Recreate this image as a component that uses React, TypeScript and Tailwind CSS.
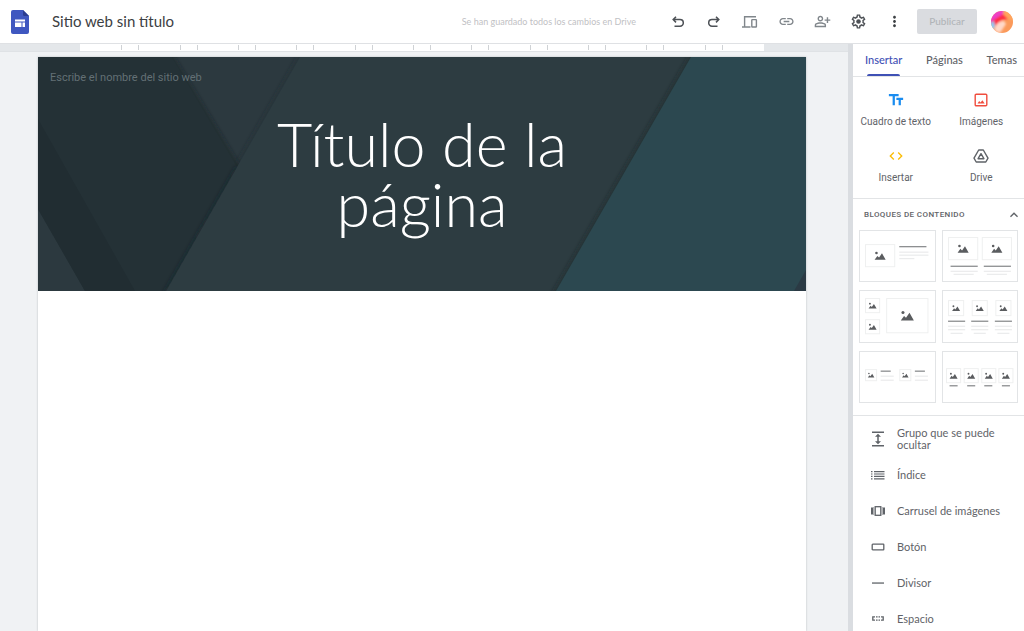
import { useState } from "react";
import type { ReactNode } from "react";
import {
  MdCode,
  MdExpand,
  MdKeyboardArrowUp,
  MdLink,
  MdMoreVert,
  MdOutlinePersonAddAlt,
  MdTextFields,
} from "react-icons/md";

function SitesLogo() {
  return (
    <svg width="18" height="24" viewBox="0 0 18 24" aria-hidden="true">
      <path d="M2 0h10l6 6v16a2 2 0 0 1-2 2H2a2 2 0 0 1-2-2V2a2 2 0 0 1 2-2z" fill="#3f57c0" />
      <path d="M12 0l6 6h-4.500a1.500 1.500 0 0 1-1.500-1.500z" fill="#2a3c8f" />
      <path d="M4 9.500h10v2H4zM4 12.500h6.500v4.500H4zM11.500 12.500H14v4.500h-2.500z" fill="#fff" />
    </svg>
  );
}

function UndoIcon({ flip = false }: { flip?: boolean }) {
  return (
    <svg
      width="12"
      height="12"
      viewBox="0 0 12 12"
      fill="none"
      stroke="currentColor"
      strokeWidth="1.5"
      className={flip ? "-scale-x-100" : ""}
      aria-hidden="true"
    >
      <path d="M4 .8L1.200 3.600 4 6.400M1.500 3.600H8a3 3 0 0 1 0 6.600H2.500" />
    </svg>
  );
}

function DevicesIcon() {
  return (
    <svg width="16" height="12" viewBox="0 0 16 12" fill="none" stroke="currentColor" strokeWidth="1.4" aria-hidden="true">
      <path d="M2.600 10.200V.8H14M0 11h8.500" />
      <rect x="9.800" y="3.600" width="4.600" height="7.400" rx=".5" />
    </svg>
  );
}

function GearIcon() {
  return (
    <svg width="17" height="17" viewBox="0 0 24 24" fill="currentColor" aria-hidden="true">
      <path d="M19.430 12.980c.04-.32.07-.64.07-.98 0-.34-.03-.66-.07-.98l2.110-1.650c.19-.15.24-.42.12-.64l-2-3.460a.5.5 0 0 0-.61-.22l-2.490 1c-.52-.4-1.080-.73-1.690-.98l-.38-2.650A.488.488 0 0 0 14 2h-4c-.25 0-.46.18-.49.42l-.38 2.650c-.61.25-1.170.59-1.690.98l-2.490-1a.5.5 0 0 0-.61.22l-2 3.460c-.13.22-.07.49.12.64l2.110 1.650c-.04.32-.07.65-.07.98 0 .33.03.66.07.98l-2.110 1.650c-.19.15-.24.42-.12.64l2 3.460c.12.22.39.3.61.22l2.490-1c.52.4 1.080.73 1.690.98l.38 2.650c.03.24.24.42.49.42h4c.25 0 .46-.18.49-.42l.38-2.650c.61-.25 1.170-.59 1.690-.98l2.490 1c.22.08.49 0 .61-.22l2-3.460a.5.5 0 0 0-.12-.64l-2.110-1.650zm-1.980-1.710c.04.31.05.52.05.73 0 .21-.02.43-.05.73l-.14 1.130.89.7 1.080.84-.7 1.210-1.270-.51-1.040-.42-.9.68c-.43.32-.84.56-1.250.73l-1.060.43-.16 1.130-.2 1.350h-1.400l-.19-1.350-.16-1.130-1.060-.43c-.43-.18-.83-.41-1.230-.71l-.91-.7-1.060.43-1.270.51-.7-1.210 1.080-.84.89-.7-.14-1.130c-.03-.31-.05-.54-.05-.74s.02-.43.05-.73l.14-1.130-.89-.7-1.080-.84.7-1.210 1.270.51 1.040.42.9-.68c.43-.32.84-.56 1.250-.73l1.060-.43.16-1.130.2-1.350h1.390l.19 1.350.16 1.130 1.060.43c.43.18.83.41 1.230.71l.91.7 1.060-.43 1.270-.51.7 1.210-1.070.85-.89.7.14 1.130z" />
      <circle cx="12" cy="12" r="3.200" />
    </svg>
  );
}

function Avatar() {
  return (
    <svg width="22" height="22" viewBox="0 0 22 22" aria-hidden="true">
      <defs>
        <clipPath id="avatar-clip">
          <circle cx="11" cy="11" r="11" />
        </clipPath>
        <filter id="avatar-soft" x="-20%" y="-20%" width="140%" height="140%">
          <feGaussianBlur stdDeviation="1.1" />
        </filter>
      </defs>
      <g clipPath="url(#avatar-clip)">
        <rect width="22" height="22" fill="#fb9a5b" />
        <g filter="url(#avatar-soft)">
          <path d="M-3-3h18l-3 6-8 7-7 3z" fill="#ee3fc4" />
          <path d="M13-2l-1 5 5 5 7 2V-2z" fill="#ffa45c" />
          <path d="M1 10l11-7 5 5-6 1-7 6z" fill="#ff2f45" />
          <path d="M-2 13l5-3 1 5-2 4-4-1z" fill="#8fc9f5" />
          <path d="M4 20c-1-5 3-10 9-10l2 3-6 9z" fill="#ffd8c8" />
        </g>
      </g>
    </svg>
  );
}

function ImageIcon() {
  return (
    <svg width="14" height="14" viewBox="0 0 14 14" aria-hidden="true">
      <rect x="1.200" y="1.200" width="11.600" height="11.600" rx="1" fill="none" stroke="#f04d3e" strokeWidth="1.400" />
      <path d="M3.500 10.500l1.700-2.400 1.300 1.400 1.900-2.300 2.300 3.300z" fill="#f04d3e" />
    </svg>
  );
}

function DriveIcon() {
  return (
    <svg width="16" height="14" viewBox="0 0 16 14" fill="none" stroke="#5f6368" strokeWidth="1.400" strokeLinejoin="round" aria-hidden="true">
      <path d="M5.700 1h4.600l4.700 8.200-2.200 3.800H3.200L1 9.200z" />
      <path d="M8 4.700l2.900 5H5.100z" />
    </svg>
  );
}

function TocIcon() {
  return (
    <svg width="14" height="10" viewBox="0 0 14 10" fill="currentColor" aria-hidden="true">
      <path d="M0 1h1.500v1.200H0zM0 3.400h1.500v1.200H0zM0 5.800h1.500V7H0zM0 8.200h1.500v1.200H0zM3 1h10.500v1.200H3zM3 3.400h10.500v1.200H3zM3 5.800h10.500V7H3zM3 8.200h10.500v1.200H3z" />
    </svg>
  );
}

function CarouselIcon() {
  return (
    <svg width="14" height="10" viewBox="0 0 14 10" aria-hidden="true">
      <path d="M0 1.500h2v7H0zM12 1.500h2v7h-2z" fill="currentColor" />
      <path d="M2.700 1v8M11.300 1v8" stroke="currentColor" strokeWidth=".6" />
      <rect x="4.200" y=".7" width="5.600" height="8.600" fill="none" stroke="currentColor" strokeWidth="1.300" />
    </svg>
  );
}

function ButtonIcon() {
  return (
    <svg width="14" height="8" viewBox="0 0 14 8" aria-hidden="true">
      <rect x="1.200" y="1.200" width="11.600" height="5.600" rx=".6" fill="none" stroke="currentColor" strokeWidth="1.300" />
    </svg>
  );
}

function DividerIcon() {
  return (
    <svg width="12" height="2" viewBox="0 0 12 2" aria-hidden="true">
      <path d="M0 .4h12v1.300H0z" fill="currentColor" />
    </svg>
  );
}

function SpacerIcon() {
  return (
    <svg width="12" height="5" viewBox="0 0 12 5" fill="none" stroke="currentColor" strokeWidth="1.300" aria-hidden="true">
      <path d="M3 .8H.8v3.400H3M9 .8h2.200v3.400H9M4 .8h1.600M6.500 .8H8M4 4.200h1.600M6.500 4.200H8" />
    </svg>
  );
}

type Box = [x: number, y: number, w: number, h: number, icon: number];
type Line = [x: number, y: number, w: number];

interface Block {
  name: string;
  boxes: Box[];
  dark: Line[];
  light: Line[];
}

const blocks: Block[] = [
  {
    name: "Imagen y texto",
    boxes: [[6, 14, 30, 23, 11]],
    dark: [[40, 16.5, 27]],
    light: [[40, 22, 29], [40, 25, 29], [40, 28.500, 15]],
  },
  {
    name: "Dos imágenes con texto",
    boxes: [[6, 7, 30, 23, 11], [39.500, 7, 30, 23, 11]],
    dark: [[8.500, 36, 27], [41.500, 36, 27]],
    light: [[8.500, 41, 27], [41.500, 41, 27], [11.500, 44, 20], [44.500, 44, 20]],
  },
  {
    name: "Collage de tres imágenes",
    boxes: [[6, 8, 15, 15, 8], [6, 29, 15, 15, 8], [27, 8, 42, 35, 13]],
    dark: [],
    light: [],
  },
  {
    name: "Tres imágenes con texto",
    boxes: [[6, 10, 16, 16, 8], [29.500, 10, 16, 16, 8], [53, 10, 16, 16, 8]],
    dark: [[6, 31, 17], [29, 31, 17], [52.500, 31, 17]],
    light: [
      [6, 36, 17], [29, 36, 17], [52.500, 36, 17],
      [6, 39.500, 17], [29, 39.500, 17], [52.500, 39.500, 17],
      [8.500, 43, 12], [31.500, 43, 12], [55, 43, 12],
    ],
  },
  {
    name: "Dos imágenes pequeñas y texto",
    boxes: [[6, 18, 12, 12, 6.5], [40, 18, 12, 12, 6.5]],
    dark: [[21.500, 20, 10], [55.500, 20, 10]],
    light: [[21.500, 25, 13], [21.500, 29, 13], [55.500, 25, 13], [55.500, 29, 13]],
  },
  {
    name: "Cuatro imágenes con texto",
    boxes: [[4, 17, 15, 15, 8], [21.500, 17, 15, 15, 8], [39, 17, 15, 15, 8], [56, 17, 15, 15, 8]],
    dark: [[7.500, 34.500, 8], [25, 34.500, 8], [42, 34.500, 8], [59.500, 34.500, 8]],
    light: [],
  },
];

function BlockPreview({ block }: { block: Block }) {
  return (
    <svg className="w-full" viewBox="0 0 76 52" aria-hidden="true">
      {block.boxes.map(([x, y, w, h, icon], i) => (
        <g key={i}>
          <rect x={x + 0.5} y={y + 0.5} width={w - 1} height={h - 1} fill="none" stroke="#eff0f0" />
          <g transform={`translate(${x + w / 2 - icon / 2} ${y + h / 2 - icon * 0.38}) scale(${icon / 12})`} fill="#5a5c5f">
            <path d="M0 9l3-4.200L4.800 6.500 8 2l4 7z" />
            <circle cx="2" cy="1.700" r="1.400" />
          </g>
        </g>
      ))}
      {block.dark.map(([x, y, w], i) => (
        <rect key={i} x={x} y={y - 0.6} width={w} height="1.300" fill="#8d8f91" />
      ))}
      {block.light.map(([x, y, w], i) => (
        <rect key={i} x={x} y={y - 0.5} width={w} height="1" fill="#e6e7e8" />
      ))}
    </svg>
  );
}

function HeaderArt() {
  return (
    <svg className="absolute inset-0 h-full w-full" viewBox="0 0 768 234" preserveAspectRatio="none" aria-hidden="true">
      <defs>
        <filter id="edge" filterUnits="userSpaceOnUse" x="-40" y="-40" width="850" height="320">
          <feGaussianBlur stdDeviation="2" />
        </filter>
        <clipPath id="left-upper">
          <path d="M0 0h262L128 234H0z" />
        </clipPath>
      </defs>
      <rect width="768" height="234" fill="#2d3c41" />
      <path d="M0 0h262L128 234H0z" fill="#2c393f" />
      <g clipPath="url(#left-upper)">
        <path d="M270-14L192 122" stroke="#232d31" strokeOpacity=".5" strokeWidth="4" filter="url(#edge)" />
        <path d="M125-14l76 126" stroke="#1a2427" strokeOpacity=".7" strokeWidth="4" filter="url(#edge)" />
      </g>
      <path d="M0 0h134l65 110-71 124H47L0 152z" fill="#243136" />
      <path d="M0 62l97 172H47L0 152z" fill="#212d32" />
      <g clipPath="url(#left-upper)">
        <path d="M199 110L120 248" stroke="#1c2629" strokeOpacity=".5" strokeWidth="3" filter="url(#edge)" />
      </g>
      <path d="M661-14L510 248" stroke="#1a2528" strokeOpacity=".6" strokeWidth="4" filter="url(#edge)" />
      <path d="M653 0L518 234h250V0z" fill="#2c4850" />
      <path d="M768 213v21h-12z" fill="#2b3a44" />
    </svg>
  );
}

function IconButton({ label, className, children }: { label: string; className: string; children: ReactNode }) {
  return (
    <button type="button" aria-label={label} className={`flex h-8 w-9 items-center justify-center ${className}`}>
      {children}
    </button>
  );
}

const insertTiles = [
  { label: "Cuadro de texto", icon: <MdTextFields className="size-[18px] text-[#1a8cf0]" /> },
  { label: "Imágenes", icon: <ImageIcon /> },
  { label: "Insertar", icon: <MdCode className="size-4 text-[#fbbc04]" /> },
  { label: "Drive", icon: <DriveIcon /> },
];

const components = [
  { label: "Grupo que se puede ocultar", icon: <MdExpand className="size-[18px]" /> },
  { label: "Índice", icon: <TocIcon /> },
  { label: "Carrusel de imágenes", icon: <CarouselIcon /> },
  { label: "Botón", icon: <ButtonIcon /> },
  { label: "Divisor", icon: <DividerIcon /> },
  { label: "Espacio", icon: <SpacerIcon /> },
];

const tabs = ["Insertar", "Páginas", "Temas"];

function TopBar() {
  return (
    <header className="flex h-11 shrink-0 items-center border-b border-[#dfe1e4] bg-white pr-[11px] pl-[11px]">
      <a href="#inicio" aria-label="Inicio de Sites">
        <SitesLogo />
      </a>
      <input
        aria-label="Nombre del documento"
        defaultValue="Sitio web sin título"
        className="ml-[23px] w-40 bg-transparent text-[15px] text-[#3c4043] outline-none"
      />
      <p className="ml-auto text-[9px] text-[#bfc1c4]">Se han guardado todos los cambios en Drive</p>
      <div className="ml-6 flex">
        <IconButton label="Deshacer" className="text-[#4d5156]">
          <UndoIcon />
        </IconButton>
        <IconButton label="Rehacer" className="text-[#4d5156]">
          <UndoIcon flip />
        </IconButton>
        <IconButton label="Vista previa" className="text-[#80868b]">
          <DevicesIcon />
        </IconButton>
        <IconButton label="Copiar enlace" className="text-[#80868b]">
          <MdLink className="size-[17px]" />
        </IconButton>
        <IconButton label="Compartir" className="text-[#80868b]">
          <MdOutlinePersonAddAlt className="size-[17px]" />
        </IconButton>
        <IconButton label="Configuración" className="text-[#4d5156]">
          <GearIcon />
        </IconButton>
        <IconButton label="Más" className="text-[#3c4043]">
          <MdMoreVert className="size-[17px]" />
        </IconButton>
      </div>
      <button type="button" className="ml-[5px] h-[25px] w-[60px] rounded-xs bg-[#dadce0] text-[10px] font-medium text-[#b1b4b8]">
        Publicar
      </button>
      <button type="button" aria-label="Cuenta" className="ml-3.5">
        <Avatar />
      </button>
    </header>
  );
}

function Ruler() {
  return (
    <div className="flex h-2 shrink-0 border-b border-[#dfe2e5] bg-[#e4e7ea] pr-[84px] pl-20">
      <div className="flex flex-1 gap-4 bg-white py-px">
        {Array.from({ length: 12 }, (_, i) => (
          <span key={i} className="flex-1 border-x border-[#cfd2d5] first:border-l-transparent last:border-r-transparent" />
        ))}
      </div>
    </div>
  );
}

function Canvas() {
  return (
    <main className="flex min-w-0 flex-1 flex-col border-r-[5px] border-[#dadde1] bg-[#f0f2f4]">
      <Ruler />
      <article className="mt-[5px] mr-[42px] ml-[38px] flex-1 bg-white shadow-[0_0_2px_rgba(60,64,67,0.3)]">
        <section className="relative flex h-[234px] items-center justify-center">
          <HeaderArt />
          <input
            aria-label="Nombre del sitio web"
            placeholder="Escribe el nombre del sitio web"
            className="absolute top-[13px] left-3 w-38 bg-transparent font-[Roboto,sans-serif] text-[11px] leading-4 outline-none placeholder:text-[#637075]"
          />
          <h1 className="relative w-80 text-center font-[Lato,sans-serif] text-[61px] leading-[60px] font-light text-white">
            Título de la página
          </h1>
        </section>
      </article>
    </main>
  );
}

function Sidebar() {
  const [active, setActive] = useState("Insertar");
  const [open, setOpen] = useState(true);
  return (
    <aside className="flex w-[171px] shrink-0 flex-col overflow-hidden bg-white text-[#5f6368]">
      <div role="tablist" className="flex h-[33px] shrink-0 justify-between border-b border-[#e2e4e6] pr-[7px] pl-3">
        {tabs.map((tab) => (
          <button
            key={tab}
            type="button"
            role="tab"
            aria-selected={tab === active}
            onClick={() => setActive(tab)}
            className={`relative text-[11px] font-medium ${tab === active ? "text-[#3f51b5]" : ""}`}
          >
            {tab}
            {tab === active && <span className="absolute inset-x-0.5 bottom-0 h-0.5 rounded-t bg-[#3f51b5]" />}
          </button>
        ))}
      </div>
      <div className="grid shrink-0 grid-cols-2 border-b border-[#e2e4e6] pt-[9px] font-[Roboto,sans-serif] text-[10px]">
        {insertTiles.map((tile) => (
          <button key={tile.label} type="button" className="flex h-14 flex-col items-center gap-1 pt-1">
            <span className="flex h-5 items-center">{tile.icon}</span>
            {tile.label}
          </button>
        ))}
      </div>
      <section className="shrink-0 border-b border-[#e2e4e6] pb-3">
        <h2>
          <button
            type="button"
            aria-expanded={open}
            onClick={() => setOpen(!open)}
            className="flex h-[31px] w-full items-center justify-between pr-0.5 pl-[11px] font-[Roboto,sans-serif] text-[8px] font-medium tracking-wider"
          >
            BLOQUES DE CONTENIDO
            <MdKeyboardArrowUp className="size-4" />
          </button>
        </h2>
        {open && (
          <div className="grid grid-cols-2 gap-x-1.5 gap-y-2 px-1.5">
            {blocks.map((block) => (
              <button key={block.name} type="button" aria-label={block.name} className="outline outline-[#e2e4e6] -outline-offset-1">
                <BlockPreview block={block} />
              </button>
            ))}
          </div>
        )}
      </section>
      <ul className="pt-[5px] text-[11px] leading-3">
        {components.map((item) => (
          <li key={item.label}>
            <button type="button" className="flex h-9 w-full items-center pr-5 pl-4 text-left">
              <span className="mr-2.5 flex w-[18px] shrink-0 justify-center">{item.icon}</span>
              {item.label}
            </button>
          </li>
        ))}
      </ul>
    </aside>
  );
}

export default function App() {
  return (
    <div className="flex h-screen flex-col bg-white font-[Lato,sans-serif]">
      <TopBar />
      <div className="flex min-h-0 flex-1">
        <Canvas />
        <Sidebar />
      </div>
    </div>
  );
}
